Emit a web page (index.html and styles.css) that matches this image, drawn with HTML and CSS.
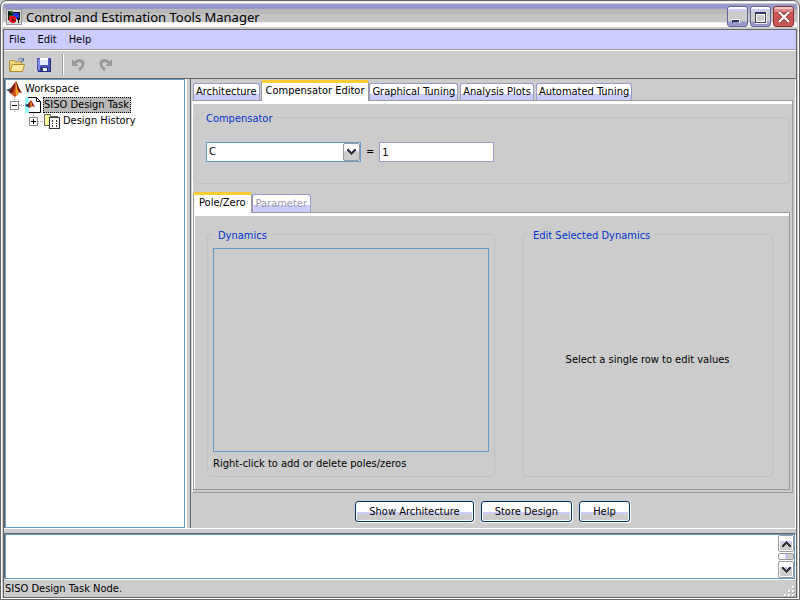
FILE: index.html
```html
<!DOCTYPE html>
<html lang="en">
<head>
<meta charset="utf-8">
<title>Control and Estimation Tools Manager</title>
<link rel="stylesheet" href="styles.css">
</head>
<body>
<div class="window">
  <header class="titlebar">
    <svg class="app-icon" width="16" height="16" viewBox="0 0 16 16" shape-rendering="crispEdges" aria-hidden="true">
      <path d="M0 0h16v16H0z" fill="#999"/><path d="M1 1h14v14H1z" fill="#d8d8d8"/>
      <path d="M2 2h5v8H2z" fill="#116622"/><path d="M7 3h7v7H7z" fill="#2233dd"/><path d="M7 3h7v1H7zM13 4h1v6h-1zM2 2h1v9H2zM2 2l5 3v1H2z" fill="#111"/>
      <path d="M4 7h5v1h1v5H9v1H5v-1H4v-1H3V8h1z" fill="#e01010"/><path d="M6 9h1v2h3v1H6z" fill="#600"/><path d="M11 9h3v2h-1v3h-1v-3h-1z" fill="#111"/>
    </svg>
    <h1 class="title">Control and Estimation Tools Manager</h1>
    <div class="window-buttons">
      <button class="win-btn" type="button" aria-label="Minimize"><svg width="18" height="18" viewBox="0 0 18 18" shape-rendering="crispEdges"><path d="M3 11h8v4H3z" fill="#fff"/><path d="M3 12h7v3H3z" fill="#333366"/><path d="M4 14h6v1H4z" fill="#99c"/></svg></button>
      <button class="win-btn" type="button" aria-label="Maximize"><svg width="18" height="18" viewBox="0 0 18 18" shape-rendering="crispEdges"><path d="M3 4h12v12H3z" fill="#eef"/><path d="M3 4h11v11H3z" fill="#444"/><path d="M4 6h9v8H4z" fill="#fff"/><path d="M5 7h7v6H5z" fill="#ccc"/><path d="M3 4h11v2H3z" fill="#333366"/></svg></button>
      <button class="win-btn close" type="button" aria-label="Close"><svg width="18" height="18" viewBox="0 0 18 18"><path d="M4 4l10 10M14 4L4 14" stroke="#833" stroke-width="4"/><path d="M4 4l10 10M14 4L4 14" stroke="#fff" stroke-width="2.4"/></svg></button>
    </div>
  </header>
  <div class="client">
    <nav class="menubar">
      <button type="button">File</button><button type="button">Edit</button><button type="button">Help</button>
    </nav>
    <div class="toolbar">
      <button type="button" aria-label="Open"><svg width="16" height="16" viewBox="0 0 16 16"><path d="M.5 14V4.500l1-1h4l1 1.500h6v9z" fill="#f3d77c" stroke="#b28a2c"/><path d="M1 14.500L3.500 7.500h12L13.500 14.500z" fill="#ffeaa0" stroke="#b28a2c"/><path d="M9 3.500c1-3 4-2.500 5-.5M14.500 1v3h-3" fill="none" stroke="#4b6c94"/></svg></button>
      <button type="button" aria-label="Save"><svg width="16" height="16" viewBox="0 0 16 16" shape-rendering="crispEdges"><path d="M1 1h14v14H2L1 14z" fill="#4e55b8"/><path d="M2 2h2v11H2z" fill="#8087e0"/><path d="M4 1h8v7H4z" fill="#e6ebff"/><path d="M4 1h8v2H4z" fill="#fff"/><path d="M4 10h8v5H4z" fill="#333b80"/><path d="M7 11h4v4H7z" fill="#f4f4ff"/><path d="M14 2h1v13H2v-1h12z" fill="#252b78"/></svg></button>
      <span class="separator"></span>
      <button type="button" disabled aria-label="Undo"><svg width="16" height="16" viewBox="0 0 16 16"><path d="M4 6c3-4 9-3 8 2-.4 2-2 3.500-4 5" fill="none" stroke="#999" stroke-width="2.800"/><path d="M1 2v7h7z" fill="#999"/></svg></button>
      <button type="button" disabled aria-label="Redo"><svg width="16" height="16" viewBox="0 0 16 16"><path d="M11 6C8 2 2 3 3 8c.4 2 2 3.500 4 5" fill="none" stroke="#999" stroke-width="2.800"/><path d="M14 2v7H7z" fill="#999"/></svg></button>
    </div>
    <main class="split">
      <div class="tree" role="tree">
        <div class="node" role="treeitem">
          <svg width="16" height="16" viewBox="0 0 16 16"><path d="M0 9l5-2 3-3 2 3-4 5z" fill="#285c78"/><path d="M5 7l5-7-2 10-3 3-2-2z" fill="#7a1c10"/><path d="M10 0c1 1 3 8 6 12-2-1-3-1-4 1l-3 3-4-3c4-3 4-9 5-13z" fill="#cf4a12"/><path d="M10 1c1 3 1 7 3 11l-3 3c-1-4 0-9 0-14z" fill="#f5a623"/><path d="M10 0c2 4 3 9 6 12l-3-1c-2-3-2-7-3-11z" fill="#6b150b"/></svg>
          <span class="node-label">Workspace</span>
        </div>
        <div class="node level-1" role="treeitem" aria-selected="true">
          <svg width="15" height="16" viewBox="0 0 15 16" shape-rendering="crispEdges"><path d="M4 0v4M4 12v4M9 8h6" stroke="#999" stroke-dasharray="1 1"/><path d="M0 4h9v9H0z" fill="#888"/><path d="M1 5h7v7H1z" fill="#fff"/><path d="M2 8h5v1H2z" fill="#000"/></svg>
          <svg width="16" height="16" viewBox="0 0 16 16"><path d="M0 0h5v16H0z" fill="#9ff"/><path d="M3.500.5h8l4 4v11h-12z" fill="#fff" stroke="#9ff"/><path d="M3 .5h8.500l4 4v11H4" fill="none" stroke="#000"/><path d="M11.500.5v4h4" fill="none" stroke="#000"/><path d="M0 8l3-1 3-4 4 7-3-1-2 2z" fill="#a01808"/><path d="M6 3l1 5-2 2z" fill="#f5a623"/><path d="M0 8l3-1 1 2-2 1z" fill="#147"/></svg>
          <span class="node-label selected">SISO Design Task</span>
        </div>
        <div class="node level-2" role="treeitem">
          <svg width="15" height="16" viewBox="0 0 15 16" shape-rendering="crispEdges"><path d="M4 0v4M9 8h6" stroke="#999" stroke-dasharray="1 1"/><path d="M0 4h9v9H0z" fill="#888"/><path d="M1 5h7v7H1z" fill="#fff"/><path d="M2 8h5v1H2zM4 6h1v5H4z" fill="#000"/></svg>
          <svg width="16" height="16" viewBox="0 0 16 16" shape-rendering="crispEdges"><path d="M0 1h7v2h7v10H0z" fill="#666"/><path d="M1 2h5v2h7v8H1z" fill="#ffff99"/><path d="M5 4h11v12H5z" fill="#333"/><path d="M6 5h9v10H6z" fill="#fff"/><path d="M8 7h1v2H8zM8 10h1v1H8zM8 12h1v2H8zM12 7h1v2h-1zM12 10h1v1h-1zM12 12h1v2h-1z" fill="#333"/></svg>
          <span class="node-label">Design History</span>
        </div>
      </div>
      <section class="workarea">
        <div class="tabs" role="tablist">
          <button class="tab" role="tab" type="button">Architecture</button>
          <button class="tab active" role="tab" type="button" aria-selected="true">Compensator Editor</button>
          <button class="tab" role="tab" type="button">Graphical Tuning</button>
          <button class="tab" role="tab" type="button">Analysis Plots</button>
          <button class="tab" role="tab" type="button">Automated Tuning</button>
        </div>
        <div class="pane outer">
          <fieldset class="group compensator">
            <legend>Compensator</legend>
            <div class="controls">
              <div class="combo">
                <select aria-label="Compensator"><option>C</option></select>
                <span class="combo-arrow"><svg width="9" height="6" viewBox="0 0 9 6" shape-rendering="crispEdges"><path d="M0 0h2v1h1v1h1v1h1V2h1V1h1V0h2v2H8v1H7v1H6v1H5v1H4V5H3V4H2V3H1V2H0z" fill="#333"/></svg></span>
              </div>
              <label for="gain">=</label>
              <input id="gain" type="text" value="1">
            </div>
          </fieldset>
          <div class="tabs sub" role="tablist">
            <button class="tab active" role="tab" type="button" aria-selected="true">Pole/Zero</button>
            <button class="tab" role="tab" type="button" disabled>Parameter</button>
          </div>
          <div class="pane inner">
            <fieldset class="group dynamics">
              <legend>Dynamics</legend>
              <div class="list"></div>
              <p>Right-click to add or delete poles/zeros</p>
            </fieldset>
            <fieldset class="group editor">
              <legend>Edit Selected Dynamics</legend>
              <p>Select a single row to edit values</p>
            </fieldset>
          </div>
        </div>
        <div class="actions">
          <button type="button">Show Architecture</button>
          <button type="button">Store Design</button>
          <button type="button">Help</button>
        </div>
      </section>
    </main>
    <section class="console">
      <div class="console-text"></div>
      <div class="scrollbar">
        <button type="button" aria-label="Scroll up"><svg width="9" height="6" viewBox="0 0 9 6" shape-rendering="crispEdges"><path d="M0 6h2V5h1V4h1V3h1v1h1v1h1v1h2V4H8V3H7V2H6V1H5V0H4v1H3v1H2v1H1v1H0z" fill="#333"/></svg></button>
        <span class="thumb"></span>
        <button type="button" aria-label="Scroll down"><svg width="9" height="6" viewBox="0 0 9 6" shape-rendering="crispEdges"><path d="M0 0h2v1h1v1h1v1h1V2h1V1h1V0h2v2H8v1H7v1H6v1H5v1H4V5H3V4H2V3H1V2H0z" fill="#333"/></svg></button>
      </div>
    </section>
    <footer class="status">
      <span>SISO Design Task Node.</span>
      <svg width="11" height="11" viewBox="0 0 11 11" shape-rendering="crispEdges" aria-hidden="true"><path d="M9 1h2v2H9zM9 5h2v2H9zM5 5h2v2H5zM9 9h2v2H9zM5 9h2v2H5zM1 9h2v2H1z" fill="#aaa"/><path d="M8 0h2v2H8zM8 4h2v2H8zM4 4h2v2H4zM8 8h2v2H8zM4 8h2v2H4zM0 8h2v2H0z" fill="#fff"/></svg>
    </footer>
  </div>
</div>
</body>
</html>
```
FILE: styles.css
```css
* { box-sizing: border-box; }

body {
  margin: 0;
  background: #ccc;
  color: #000;
  font: 11px/14px "DejaVu Sans Condensed", "DejaVu Sans", sans-serif;
}

button, input, select {
  margin: 0;
  padding: 0;
  border: 0;
  border-radius: 0;
  background: none;
  color: inherit;
  font: inherit;
}

svg { display: block; flex: none; }
p { margin: 0; }

.window {
  display: flex;
  flex-direction: column;
  height: 100vh;
  padding: 0 2px 1px;
  border: 1px solid #666;
  border-radius: 7px 7px 0 0;
  background: #ccc;
  box-shadow: inset 1px 1px #fff, inset -1px -1px #fff;
}

.titlebar {
  display: flex;
  align-items: center;
  height: 28px;
  padding: 5px 3px 2px;
  background: linear-gradient(#eee 0 1px, #fff 1px 2px, #ccc 2px 3px, #99c 3px 8px, #b8b8b8 8px 13px, #c4c4c4 13px 21px, #eef 21px 22px, #fff 22px 26px, #ccc 26px);
  border-radius: 6px 6px 0 0;
}

.title {
  flex: 1;
  margin: 0 0 0 4px;
  font: 13px/18px "Noto Sans", sans-serif;
}

.window-buttons { display: flex; gap: 2px; }

.win-btn {
  display: grid;
  place-items: center;
  width: 21px;
  height: 21px;
  border: 1px solid #669;
  border-radius: 3px;
  background: linear-gradient(#fff 0 2px, #ccf 2px 4px, #ccc 4px 14px, #99c 15px);
}

.win-btn.close {
  border-color: #833;
  background: linear-gradient(#f4c8c8 0 2px, #d88 2px 5px, #c55 5px);
}

.client {
  display: flex;
  flex: 1;
  flex-direction: column;
  min-height: 0;
  border: 1px solid #666;
}

.menubar {
  display: flex;
  gap: 12px;
  height: 20px;
  padding: 0 5px;
  border-bottom: 1px solid #999;
  background: #ccf;
}

.toolbar {
  display: flex;
  align-items: center;
  gap: 11px;
  height: 29px;
  padding: 0 5px;
  border-top: 1px solid #fff;
  border-bottom: 1px solid #666;
}

.separator {
  width: 2px;
  height: 21px;
  margin: 0 -4px 0 -1px;
  border-left: 1px solid #999;
  background: #fff;
}

.split {
  display: flex;
  flex: 1;
  min-height: 0;
  margin-bottom: 6px;
  box-shadow: 0 1px #fff;
}

.tree {
  width: 180px;
  margin-left: 1px;
  padding-top: 1px;
  border: 1px solid #69c;
  background: #fff;
  box-shadow: -1px 0 #666, 2px 0 #fff;
}

.node { display: flex; align-items: center; height: 16px; }
.level-1 { padding-left: 4px; }
.level-2 { padding-left: 23px; }
.node-label { margin-left: 2px; padding: 0 1px; white-space: nowrap; }
.node-label.selected { padding: 0 1px 0 0; border: 1px dotted #000; background: #b8b8b8; }

.workarea {
  display: flex;
  flex: 1;
  flex-direction: column;
  min-width: 0;
  margin-left: 5px;
  padding: 1px 3px 0 1px;
  border-left: 1px solid #666;
  box-shadow: inset -1px 0 #fff;
}

.tabs {
  display: flex;
  align-items: flex-end;
  gap: 2px;
  height: 20px;
  padding-left: 1px;
}

.tab {
  height: 17px;
  padding: 0 2px;
  border: 1px solid #99c;
  border-bottom: 0;
  border-radius: 3px 3px 0 0;
  background: linear-gradient(#fff 0 10px, #ccf 10px);
  white-space: nowrap;
}

.tab.active {
  z-index: 1;
  height: 21px;
  margin: 0 -2px -1px -1px;
  padding: 0 4px 2px;
  border-color: #999;
  border-top: 3px solid #fc3;
  background: #fff;
}

.tab:disabled { color: #99a; }

.pane {
  display: flex;
  flex: 1;
  min-height: 0;
  border: 1px solid #999;
  border-left-color: #fff;
  box-shadow: inset 0 3px #fff;
}

.outer { flex-direction: column; padding: 7px 2px 2px 0; }

.group {
  display: flex;
  min-width: 0;
  margin: 0;
  padding: 5px;
  border: 1px solid #c0c0c0;
  border-radius: 4px;
}

.group legend { padding: 4px 5px 0; color: #03c; }

.compensator { height: 76px; margin-left: 2px; }

.controls {
  display: flex;
  flex: 1;
  gap: 5px;
  padding: 11px 5px;
}

.combo { position: relative; width: 155px; }

.combo select, .controls input {
  appearance: none;
  width: 100%;
  height: 20px;
  padding: 0 2px;
  border: 1px solid #69c;
  background: #fff;
}

.controls label { line-height: 20px; }
.controls input { width: 115px; border-color: #99c; }

.combo-arrow {
  position: absolute;
  top: 1px;
  right: 1px;
  display: grid;
  place-items: center;
  width: 17px;
  height: 18px;
  border: 1px solid #999;
  border-radius: 2px;
  background: linear-gradient(#fff 0 7px, #ccf 7px 8px, #ccc 8px);
  pointer-events: none;
}

.sub { margin-top: 8px; padding-left: 0; }
.sub .tab { height: 18px; padding: 0 3px; }
.sub .tab.active { height: 21px; margin-left: 0; padding: 0 5px 2px; }

.inner {
  gap: 27px;
  padding: 12px 16px 12px 13px;
  border-left: 1px solid #999;
  box-shadow: inset 1px 3px #fff;
}

.inner .group { flex-direction: column; }
.dynamics { flex: 290; }

.list { flex: 1; margin-bottom: 5px; border: 1px solid #69c; }

.editor {
  flex: 251;
  align-items: center;
  justify-content: center;
}

.actions {
  display: flex;
  justify-content: center;
  gap: 7px;
  padding: 8px 0 6px;
}

.actions button {
  height: 21px;
  padding: 0 13px;
  border: 1px solid #036;
  border-radius: 3px;
  background: linear-gradient(#fff 0 10px, #ccf 10px 12px, #ccc 12px);
  box-shadow: inset 0 0 0 1px #fff, 1px 1px #fff;
}

.console {
  display: flex;
  height: 45px;
  margin: 0 1px;
  border: 1px solid #69c;
  background: #fff;
  box-shadow: -1px -1px #666, 0 -1px #666, 1px 1px #fff;
}

.console-text { flex: 1; }

.scrollbar { display: flex; flex-direction: column; gap: 1px; width: 16px; }

.scrollbar button {
  display: grid;
  place-items: center;
  height: 17px;
  border: 1px solid #999;
  border-radius: 2px;
  background: linear-gradient(#fff 0 5px, #ccf 5px 7px, #ccc 7px);
  box-shadow: inset 0 0 0 1px #fff;
}

.thumb {
  height: 7px;
  border: 1px solid #999;
  border-radius: 2px;
  background: linear-gradient(90deg, #fff 6px, #ccf 6px 8px, #ccc 8px);
}

.status {
  display: flex;
  align-items: flex-end;
  justify-content: space-between;
  height: 18px;
  padding: 2px 1px 0;
}

.status span { align-self: center; }
```
